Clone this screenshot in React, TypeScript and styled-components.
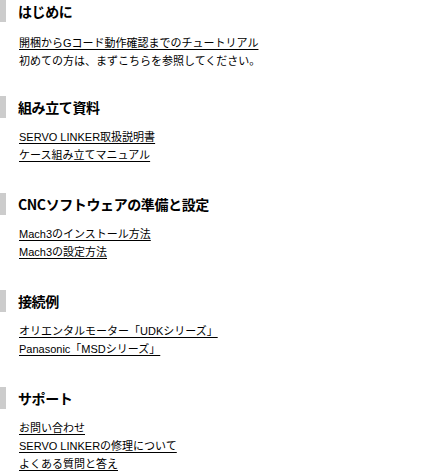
import styled, { createGlobalStyle } from "styled-components";

const GlobalStyle = createGlobalStyle`
  html, body {
    margin: 0;
    padding: 0;
    background: #ffffff;
  }
  body {
    font-family: "Liberation Sans", "Noto Sans CJK JP", sans-serif;
    color: #000000;
  }
`;

const Page = styled.div`
  display: flex;
  flex-direction: column;
  width: 426px;
`;

const Section = styled.section<{ $first?: boolean }>`
  display: flex;
  flex-direction: column;
  gap: ${(p) => (p.$first ? "12px" : "10px")};
  padding-bottom: ${(p) => (p.$first ? "26px" : "29px")};
`;

const Heading = styled.h2`
  margin: 0;
  height: 22px;
  line-height: 22px;
  border-left: 6px solid #cccccc;
  padding-left: 12px;
  font-family: "Noto Sans CJK JP", sans-serif;
  font-size: 14px;
  font-weight: bold;
  letter-spacing: -0.4px;
`;

const LinkList = styled.ul`
  list-style: none;
  margin: 0;
  padding: 0 0 0 19px;
  display: flex;
  flex-direction: column;
`;

const Item = styled.li`
  height: 18px;
  line-height: 18px;
  font-size: 11px;
  white-space: nowrap;
`;

const Link = styled.a`
  color: #000000;
  text-decoration: underline;
  text-underline-offset: 2px;
`;

type Entry = { text: string; link?: boolean };

const sections: { title: string; items: Entry[] }[] = [
  {
    title: "はじめに",
    items: [
      { text: "開梱からGコード動作確認までのチュートリアル", link: true },
      { text: "初めての方は、まずこちらを参照してください。" },
    ],
  },
  {
    title: "組み立て資料",
    items: [
      { text: "SERVO LINKER取扱説明書", link: true },
      { text: "ケース組み立てマニュアル", link: true },
    ],
  },
  {
    title: "CNCソフトウェアの準備と設定",
    items: [
      { text: "Mach3のインストール方法", link: true },
      { text: "Mach3の設定方法", link: true },
    ],
  },
  {
    title: "接続例",
    items: [
      { text: "オリエンタルモーター「UDKシリーズ」", link: true },
      { text: "Panasonic「MSDシリーズ」", link: true },
    ],
  },
  {
    title: "サポート",
    items: [
      { text: "お問い合わせ", link: true },
      { text: "SERVO LINKERの修理について", link: true },
      { text: "よくある質問と答え", link: true },
    ],
  },
];

const App = () => {
  return (
    <>
      <GlobalStyle />
      <Page>
        {sections.map((s, i) => (
          <Section key={s.title} $first={i === 0}>
            <Heading>{s.title}</Heading>
            <LinkList>
              {s.items.map((it) => (
                <Item key={it.text}>
                  {it.link ? <Link href="#">{it.text}</Link> : it.text}
                </Item>
              ))}
            </LinkList>
          </Section>
        ))}
      </Page>
    </>
  );
};

export default App;
